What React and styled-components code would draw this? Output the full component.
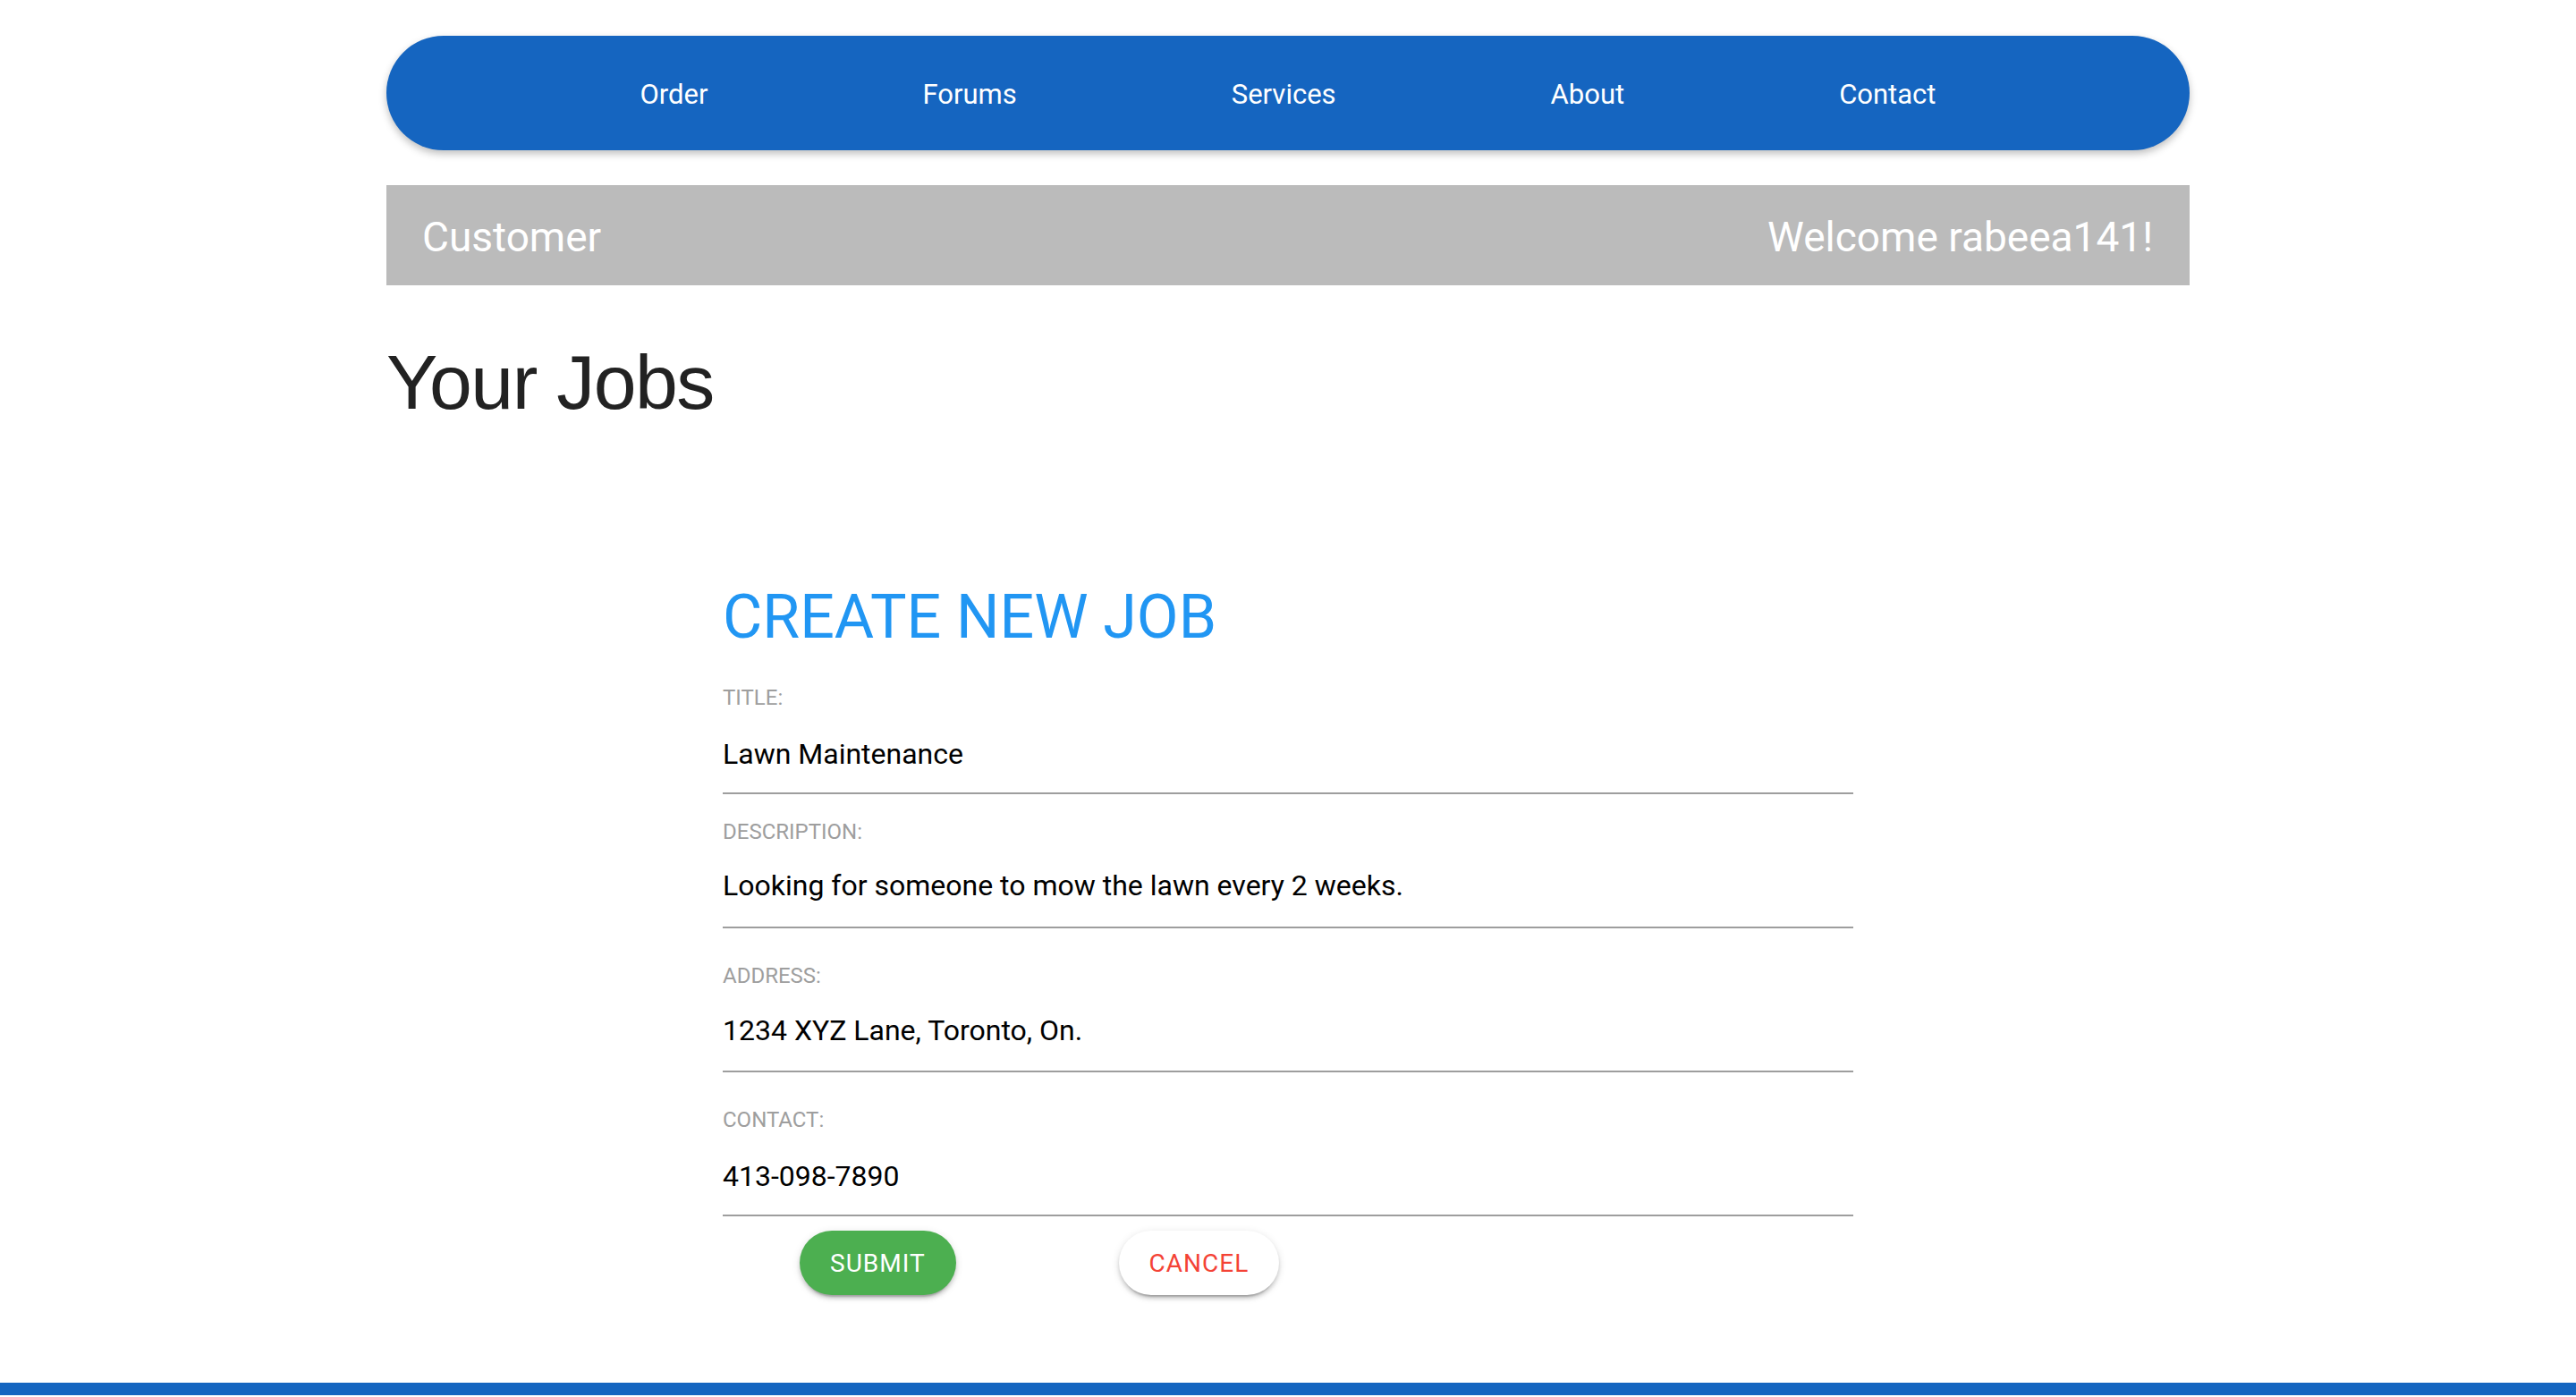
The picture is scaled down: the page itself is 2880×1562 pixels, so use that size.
import styled, { createGlobalStyle } from 'styled-components';

const GlobalStyle = createGlobalStyle`
  body {
    margin: 0;
    font-family: Roboto, 'Liberation Sans', sans-serif;
    background: #fff;
  }
`;

const navItems = ['Order', 'Forums', 'Services', 'About', 'Contact'];

// space = gap above the field, lift = how much closer the value sits to its label
const fields = [
  { label: 'TITLE:', value: 'Lawn Maintenance', space: 44, lift: 0 },
  { label: 'DESCRIPTION:', value: 'Looking for someone to mow the lawn every 2 weeks.', space: 30, lift: 3 },
  { label: 'ADDRESS:', value: '1234 XYZ Lane, Toronto, On.', space: 41, lift: 2 },
  { label: 'CONTACT:', value: '413-098-7890', space: 41, lift: 0 },
];

const App = () => {
  return (
    <>
      <GlobalStyle />
      <Page>
        <Container>
          <NavBar>
            {navItems.map((item) => (
              <NavLink key={item} href="#">
                {item}
              </NavLink>
            ))}
          </NavBar>
          <Banner>
            <BannerText>Customer</BannerText>
            <BannerText>Welcome rabeea141!</BannerText>
          </Banner>
          <PageTitle>Your Jobs</PageTitle>
          <JobForm onSubmit={(e) => e.preventDefault()}>
            <FormTitle>CREATE NEW JOB</FormTitle>
            {fields.map((f) => (
              <Field key={f.label} $space={f.space}>
                <FieldLabel>{f.label}</FieldLabel>
                <FieldInput type="text" defaultValue={f.value} $lift={f.lift} />
              </Field>
            ))}
            <ButtonRow>
              <Btn type="submit" $variant="submit">
                Submit
              </Btn>
              <Btn type="button" $variant="cancel">
                Cancel
              </Btn>
            </ButtonRow>
          </JobForm>
        </Container>
        <Footer />
      </Page>
    </>
  );
};

export default App;

const Page = styled.div`
  padding-top: 40px;
`;

const Container = styled.div`
  width: 70%;
  margin: 0 auto;
`;

const NavBar = styled.nav`
  height: 128px;
  border-radius: 64px;
  background: #1565c0;
  box-shadow: 0 4px 8px rgba(0, 0, 0, 0.25);
  display: flex;
  align-items: center;
  justify-content: center;
  gap: 240px;
  padding-top: 3px;
  box-sizing: border-box;
`;

const NavLink = styled.a`
  color: #fff;
  text-decoration: none;
  font-family: Roboto, sans-serif;
  font-size: 31px;
  line-height: 31px;
`;

const Banner = styled.div`
  margin-top: 39px;
  height: 112px;
  background: #bbbbbb;
  display: flex;
  align-items: center;
  justify-content: space-between;
  padding: 4px 41px 0 40px;
  box-sizing: border-box;
`;

const BannerText = styled.span`
  color: #fff;
  font-family: Roboto, sans-serif;
  font-size: 46px;
  line-height: 46px;
`;

const PageTitle = styled.h1`
  margin: 65px 0 0;
  font-family: 'Liberation Sans', Arial, sans-serif;
  font-weight: 400;
  font-size: 86px;
  line-height: 86px;
  letter-spacing: -1.5px;
  color: #222;
`;

const JobForm = styled.form`
  width: 1264px;
  margin: 186px auto 0;
`;

const FormTitle = styled.h2`
  margin: 0;
  font-family: Roboto, sans-serif;
  font-weight: 400;
  font-size: 68px;
  line-height: 68px;
  color: #2196f3;
`;

const Field = styled.div`
  margin-top: ${(p) => p.$space}px;
  display: flex;
  flex-direction: column;
`;

const FieldLabel = styled.label`
  font-family: Roboto, sans-serif;
  font-size: 24px;
  line-height: 24px;
  color: #9e9e9e;
`;

const FieldInput = styled.input`
  margin-top: ${(p) => 35 - p.$lift}px;
  padding: 0 0 ${(p) => 27 + p.$lift}px;
  height: 32px;
  border: none;
  border-bottom: 2px solid #9e9e9e;
  outline: none;
  background: transparent;
  font-family: Roboto, sans-serif;
  font-size: 32px;
  line-height: 32px;
  color: #000;
  box-sizing: content-box;
`;

const ButtonRow = styled.div`
  margin-top: 16px;
  display: flex;
  gap: 182px;
  padding-left: 86px;
`;

const Btn = styled.button`
  height: 72px;
  padding: 0 34px;
  border: none;
  border-radius: 36px;
  font-family: Roboto, sans-serif;
  font-weight: 400;
  font-size: 28px;
  letter-spacing: 1px;
  text-transform: uppercase;
  cursor: pointer;
  background: ${(p) => (p.$variant === 'submit' ? '#4caf50' : '#fff')};
  color: ${(p) => (p.$variant === 'submit' ? '#fff' : '#f44336')};
  box-shadow: 0 6px 2px -4px rgba(0, 0, 0, 0.2), 0 4px 4px 0 rgba(0, 0, 0, 0.14),
    0 2px 10px 0 rgba(0, 0, 0, 0.12);
`;

const Footer = styled.footer`
  margin-top: 98px;
  height: 14px;
  background: #1565c0;
`;
